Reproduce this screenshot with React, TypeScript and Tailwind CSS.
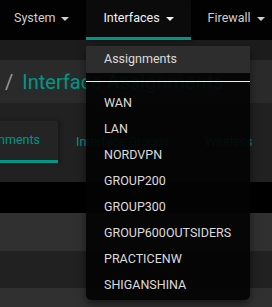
import React from 'react';

const navItems = [
  { label: 'System', active: false },
  { label: 'Interfaces', active: true },
  { label: 'Firewall', active: false },
];

const menuItems = [
  'WAN',
  'LAN',
  'NORDVPN',
  'GROUP200',
  'GROUP300',
  'GROUP600OUTSIDERS',
  'PRACTICENW',
  'SHIGANSHINA',
];

const Caret: React.FC = () => (
  <span className="ml-[6px] inline-block h-0 w-0 border-x-[4px] border-t-[4px] border-x-transparent border-t-current" />
);

const App: React.FC = () => {
  return (
    <div
      className="relative h-[307px] w-[272px] overflow-hidden bg-[#303030]"
      style={{ fontFamily: 'Roboto, "Liberation Sans", sans-serif' }}
    >
      {/* top navbar */}
      <nav className="flex h-[40px] bg-[#020202]">
        <div className="-ml-[3px] flex shrink-0">
          {navItems.map((item) => (
            <div
              key={item.label}
              className={`flex h-[40px] shrink-0 items-center whitespace-nowrap border-b-[3px] px-[17px] text-[12.5px] ${
                item.active
                  ? 'border-[#009688] bg-[#0b0b0b] text-[#f2f2f2] shadow-[3px_0_4px_rgba(0,0,0,0.6)]'
                  : 'border-transparent text-[#cfcfcf]'
              }`}
            >
              {item.label}
              <Caret />
            </div>
          ))}
        </div>
      </nav>

      <div className="h-[20px] bg-[#1c1c1c]" />

      {/* breadcrumb */}
      <div className="flex h-[43px] items-center gap-[9px] whitespace-nowrap bg-[#2a2a2a] pl-[5px] text-[20px]">
        <span className="text-[#9a9a9a]">/</span>
        <span className="text-[#009688]">Interface Assignments</span>
      </div>

      {/* tabs */}
      <div className="h-[79px] bg-[#212121] pt-[18px]">
        <div className="-ml-[51px] flex text-[12.5px] text-[#009688]">
          <div className="flex h-[42px] shrink-0 items-center whitespace-nowrap border-b-[3px] border-[#009688] bg-[#242424] px-[18px] shadow-[2px_0_4px_rgba(0,0,0,0.35)]">
            Assignments
          </div>
          <div className="flex h-[42px] shrink-0 items-center whitespace-nowrap px-[18px]">Interface Groups</div>
          <div className="flex h-[42px] shrink-0 items-center whitespace-nowrap px-[18px]">Wireless</div>
        </div>
      </div>

      {/* table rows */}
      <div className="h-[31px] bg-[#000]" />
      <div className="h-[38px] bg-[#303030]" />
      <div className="h-[37px] bg-[#212121]" />
      <div className="h-[38px] bg-[#303030]" />

      {/* dropdown menu */}
      <div className="absolute left-[86px] top-[46px] w-[164px] rounded-b-[5px] bg-[#030303]/[0.93] pb-[2px] text-[12.5px] text-[#dcdcdc] shadow-[0_4px_8px_rgba(0,0,0,0.5)]">
        <div className="flex h-[27px] items-center bg-[#2d2d2d] pl-[18px]">Assignments</div>
        <div className="mt-[8px] h-px bg-[#eeeeee]" />
        <div className="pt-[8px]">
          {menuItems.map((item) => (
            <div key={item} className="flex h-[26px] items-center pl-[18px]">
              {item}
            </div>
          ))}
        </div>
      </div>
    </div>
  );
};

export default App;
